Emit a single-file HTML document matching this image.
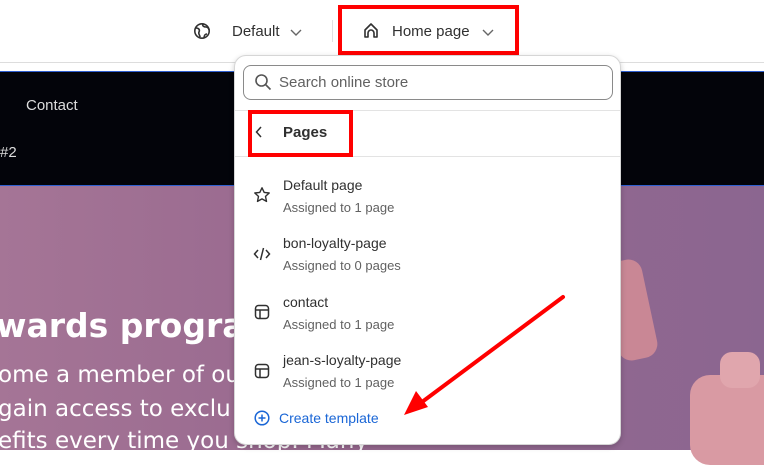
<!DOCTYPE html>
<html><head><meta charset="utf-8"><style>
*{margin:0;padding:0;box-sizing:border-box}
body{width:764px;height:450px;overflow:hidden;position:relative;font-family:"Liberation Sans",sans-serif;background:#fff}
.top{position:absolute;left:0;top:0;width:764px;height:63px;background:#fff;border-bottom:1px solid #ddd}
.blk{position:absolute;left:0;top:71px;width:764px;height:115px;background:#03040a;border-top:1px solid #2f5fd0;border-bottom:1px solid #2f5fd0}
.hero{position:absolute;left:0;top:186px;width:764px;height:264px;background:linear-gradient(90deg,#a57596 0%,#98698f 40%,#8b6690 100%)}
.t{position:absolute;white-space:nowrap}
.red{position:absolute;border:4px solid #f00}
.panel{position:absolute;left:234px;top:55px;width:387px;height:390px;background:#fff;border:1px solid #d6d6d6;border-radius:12px;box-shadow:0 2px 6px rgba(0,0,0,.2)}
.search{position:absolute;left:8px;top:9px;width:370px;height:35px;border:1px solid #8a8a8a;border-radius:8px}
.sep{position:absolute;left:0;width:385px;height:1px;background:#e3e3e3}
.name{font-size:14px;color:#303030}
.sub{font-size:13px;color:#616161}
.hd{font-family:"DejaVu Sans",sans-serif;color:#fff}
</style></head><body>
<div class="top"></div>
<svg style="position:absolute;left:193px;top:22px" width="18" height="18" viewBox="0 0 18 18" fill="none" stroke="#303030" stroke-width="1.6"><circle cx="9" cy="9" r="7.2"/><path d="M3 6c3 0 4 2 3 4s1 3 1 5M10 2c-1 2 1 3 3 3s3 2 3 3M11 16c0-2 1-4 3-4"/></svg>
<div class="t" style="left:232px;top:23px;font-size:15px;color:#303030">Default</div>
<svg style="position:absolute;left:290px;top:29px" width="12" height="8" viewBox="0 0 12 8" fill="none" stroke="#666" stroke-width="1.4"><path d="M1 1l5 5 5-5"/></svg>
<div style="position:absolute;left:332px;top:20px;width:1px;height:22px;background:#e0e0e0"></div>
<svg style="position:absolute;left:362px;top:22px" width="18" height="18" viewBox="0 0 18 18" fill="none" stroke="#303030" stroke-width="1.6"><path d="M3 15V8l6-6 6 6v7h-3v-4a3 3 0 0 0-6 0v4z" stroke-linejoin="round"/></svg>
<div class="t" style="left:392px;top:23px;font-size:15px;color:#303030">Home page</div>
<svg style="position:absolute;left:482px;top:29px" width="12" height="8" viewBox="0 0 12 8" fill="none" stroke="#666" stroke-width="1.4"><path d="M1 1l5 5 5-5"/></svg>
<div class="red" style="left:338px;top:5px;width:181px;height:50px"></div>

<div class="blk"></div>
<div class="t" style="left:26px;top:97px;font-size:15px;color:#ddd">Contact</div>
<div class="t" style="left:0;top:144px;font-size:15px;color:#ddd">#2</div>
<div class="hero"></div>
<div style="position:absolute;left:610px;top:260px;width:40px;height:100px;background:#c98795;border-radius:14px;transform:rotate(-12deg)"></div>
<div style="position:absolute;left:690px;top:375px;width:100px;height:90px;background:#d99aa3;border-radius:20px"></div>
<div style="position:absolute;left:720px;top:352px;width:40px;height:36px;background:#e0a6ad;border-radius:12px"></div>
<div class="t hd" style="left:-4px;top:306px;font-size:33px;font-weight:bold">wards progra</div>
<div class="t hd" style="left:-2px;top:362px;font-size:23px">ome a member of ou</div>
<div class="t hd" style="left:-2px;top:396px;font-size:23px">gain access to exclu</div>
<div class="t hd" style="left:-2px;top:428px;font-size:23px">efits every time you shop. Many</div>

<div class="panel">
 <div class="search"></div>
 <svg style="position:absolute;left:19px;top:17px" width="18" height="18" viewBox="0 0 18 18" fill="none" stroke="#555" stroke-width="1.6"><circle cx="7.5" cy="7.5" r="5.5"/><path d="M11.5 11.5l5 5"/></svg>
 <div class="t" style="left:44px;top:18px;font-size:15px;color:#616161">Search online store</div>
 <div class="sep" style="top:54px"></div>
 <svg style="position:absolute;left:20px;top:70px" width="8" height="12" viewBox="0 0 8 12" fill="none" stroke="#303030" stroke-width="1.5"><path d="M6 1L1.5 6 6 11"/></svg>
 <div class="t" style="left:48px;top:68px;font-size:15px;font-weight:bold;color:#303030">Pages</div>
 <div class="sep" style="top:100px"></div>
 <svg style="position:absolute;left:18px;top:130px" width="18" height="18" viewBox="0 0 18 18" fill="none" stroke="#303030" stroke-width="1.4" stroke-linejoin="round"><path d="M9 1.8l2.2 4.6 5 .6-3.7 3.4 1 5-4.5-2.5-4.5 2.5 1-5L1.8 7l5-.6z"/></svg>
 <div class="t name" style="left:48px;top:121px">Default page</div>
 <div class="t sub" style="left:48px;top:144px">Assigned to 1 page</div>
 <svg style="position:absolute;left:18px;top:189px" width="18" height="18" viewBox="0 0 18 18" fill="none" stroke="#303030" stroke-width="1.5"><path d="M5 5L1.5 9 5 13M13 5l3.5 4-3.5 4M10.5 3l-3 12"/></svg>
 <div class="t name" style="left:48px;top:179px">bon-loyalty-page</div>
 <div class="t sub" style="left:48px;top:202px">Assigned to 0 pages</div>
 <svg style="position:absolute;left:19px;top:248px" width="16" height="16" viewBox="0 0 16 16" fill="none" stroke="#303030" stroke-width="1.5"><rect x="1.5" y="1.5" width="13" height="13" rx="3"/><path d="M1.5 6h13M6 6v8.5"/></svg>
 <div class="t name" style="left:48px;top:238px">contact</div>
 <div class="t sub" style="left:48px;top:261px">Assigned to 1 page</div>
 <svg style="position:absolute;left:19px;top:307px" width="16" height="16" viewBox="0 0 16 16" fill="none" stroke="#303030" stroke-width="1.5"><rect x="1.5" y="1.5" width="13" height="13" rx="3"/><path d="M1.5 6h13M6 6v8.5"/></svg>
 <div class="t name" style="left:48px;top:296px">jean-s-loyalty-page</div>
 <div class="t sub" style="left:48px;top:319px">Assigned to 1 page</div>
 <svg style="position:absolute;left:19px;top:354px" width="16" height="16" viewBox="0 0 16 16" fill="none" stroke="#1a66d6" stroke-width="1.5"><circle cx="8" cy="8" r="6.8"/><path d="M8 4.5v7M4.5 8h7"/></svg>
 <div class="t" style="left:44px;top:354px;font-size:14px;color:#1a66d6">Create template</div>
</div>
<div class="red" style="left:248px;top:110px;width:105px;height:47px"></div>
<svg style="position:absolute;left:0;top:0" width="764" height="450"><path d="M563 297L418 405" stroke="#f00" stroke-width="4" stroke-linecap="round"/><path d="M404 415l12-24 12 16z" fill="#f00"/></svg>
</body></html>
